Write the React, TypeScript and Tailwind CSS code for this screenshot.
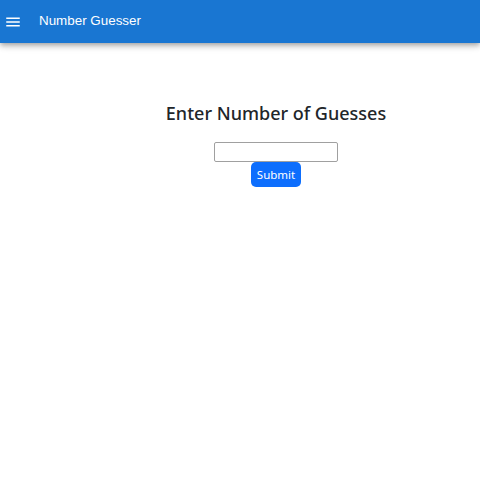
import React from "react";

export default function App() {
  return (
    <div className="w-[480px] h-[480px] bg-white" style={{ fontFamily: "Roboto, sans-serif" }}>
      <header className="h-[43px] bg-[#1976d2] flex items-center shadow-[0_2px_4px_-1px_rgba(0,0,0,0.2),0_4px_5px_0_rgba(0,0,0,0.14),0_1px_10px_0_rgba(0,0,0,0.12)]">
        <svg className="ml-[4px]" width="18" height="18" viewBox="0 0 24 24" fill="white">
          <path d="M3 18h18v-2H3v2zm0-5h18v-2H3v2zm0-7v2h18V6H3z" />
        </svg>
        <span className="ml-[17px] text-white text-[13.4px]" style={{ fontFamily: "'Liberation Sans', Arial, sans-serif" }}>
          Number Guesser
        </span>
      </header>
      <main className="pl-[72px] pt-[58px] flex flex-col items-center" style={{ fontFamily: "'Noto Sans', 'Open Sans', sans-serif" }}>
        <h4 className="text-[18px] font-medium text-[#212529] leading-[24px] mb-[17px]">Enter Number of Guesses</h4>
        <input className="w-[124px] h-[20px] border border-[#a0a0a0] rounded-[2px]" />
        <button className="w-[50px] h-[25px] bg-[#0d6efd] text-white text-[11.5px] rounded-[5px]">Submit</button>
      </main>
    </div>
  );
}
